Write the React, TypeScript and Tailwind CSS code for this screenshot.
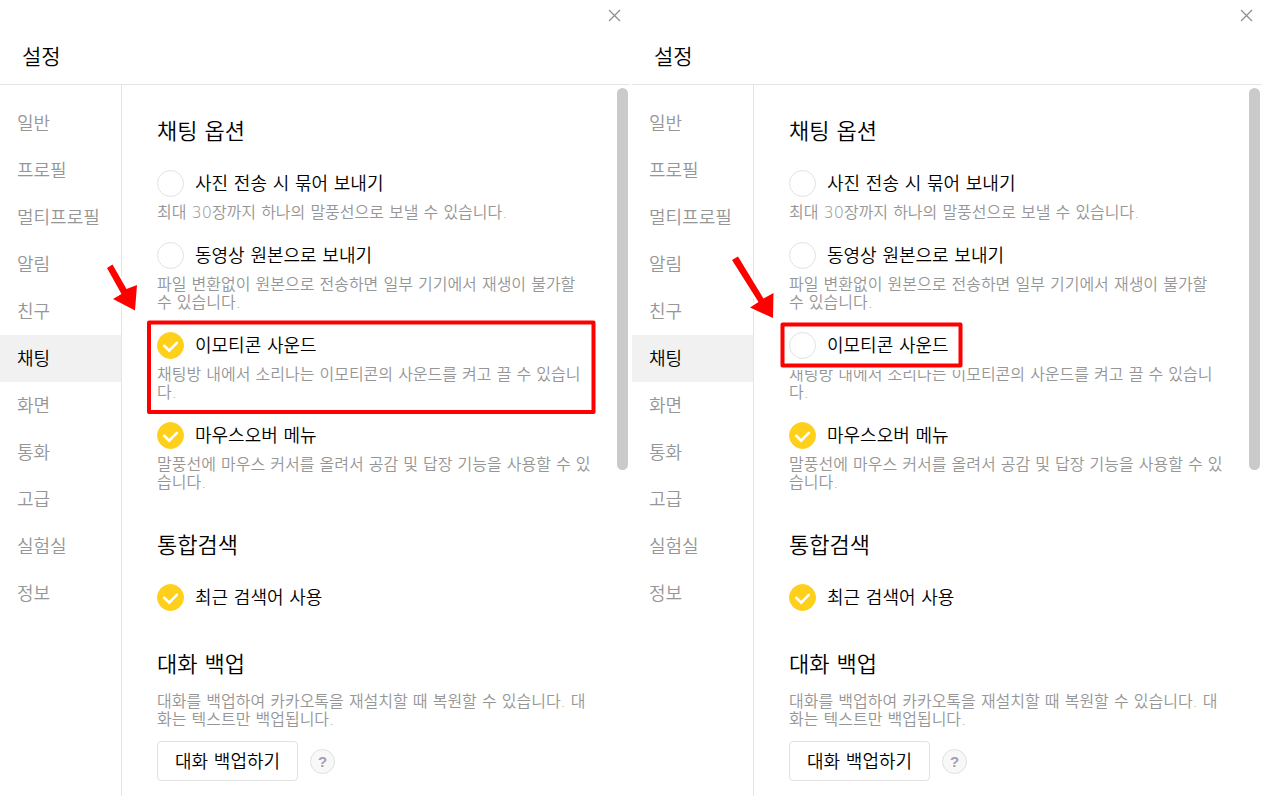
import { ReactNode } from "react";

type Option = { label: string; checked: boolean; desc?: string };

const MENU = ["일반", "프로필", "멀티프로필", "알림", "친구", "채팅", "화면", "통화", "고급", "실험실", "정보"];

function OptionRow({ id, option }: { id: string; option: Option }) {
  return (
    <li>
      <label htmlFor={id} className="flex h-[27px] cursor-pointer items-center gap-[11px] text-[18px] leading-[27px] text-black">
        <span className="grid size-[27px] shrink-0">
          <input
            id={id}
            type="checkbox"
            defaultChecked={option.checked}
            className="peer col-start-1 row-start-1 size-[27px] appearance-none rounded-full border border-[#e2e2e2] bg-white checked:border-[#ffd01a] checked:bg-[#ffd01a]"
          />
          <svg viewBox="0 0 27 27" className="pointer-events-none col-start-1 row-start-1 hidden size-[27px] peer-checked:block" aria-hidden="true">
            <path d="M7.200 13.800l5 4.800 7.600-7.800" fill="none" stroke="#fff" strokeWidth="2.6" strokeLinecap="round" />
          </svg>
        </span>
        {option.label}
      </label>
      {option.desc && <Description className="mt-[7px]">{option.desc}</Description>}
    </li>
  );
}

function Description({ children, className }: { children: ReactNode; className: string }) {
  return <p className={`whitespace-pre-line text-[16px] leading-[18px] text-[#969696] ${className}`}>{children}</p>;
}

function SectionTitle({ children }: { children: ReactNode }) {
  return <h2 className="text-[22px] leading-[28px] text-black">{children}</h2>;
}

function SettingsPanel({ name, soundOn, children }: { name: string; soundOn: boolean; children: ReactNode }) {
  const options: Option[] = [
    { label: "사진 전송 시 묶어 보내기", checked: false, desc: "최대 30장까지 하나의 말풍선으로 보낼 수 있습니다." },
    {
      label: "동영상 원본으로 보내기",
      checked: false,
      desc: "파일 변환없이 원본으로 전송하면 일부 기기에서 재생이 불가할\n수 있습니다.",
    },
    {
      label: "이모티콘 사운드",
      checked: soundOn,
      desc: "채팅방 내에서 소리나는 이모티콘의 사운드를 켜고 끌 수 있습니\n다.",
    },
    {
      label: "마우스오버 메뉴",
      checked: true,
      desc: "말풍선에 마우스 커서를 올려서 공감 및 답장 기능을 사용할 수 있\n습니다.",
    },
  ];
  return (
    <section className="relative flex min-h-screen min-w-0 flex-1 flex-col bg-white">
      <header className="flex h-[85px] flex-col border-b border-[#e5e5e5]">
        <button type="button" aria-label="닫기" className="mt-[9px] mr-[9px] self-end">
          <svg viewBox="0 0 13 13" className="size-[13px]" aria-hidden="true">
            <path d="M1 1l11 11M12 1L1 12" stroke="#918a94" strokeWidth="1.2" />
          </svg>
        </button>
        <h1 className="mt-[21px] pl-[22px] text-[21px] leading-[28px] text-black">설정</h1>
      </header>
      <div className="flex flex-1">
        <nav className="w-[122px] shrink-0 border-r border-[#e5e5e5] pt-[15px]">
          <ul>
            {MENU.map((item) => (
              <li key={item}>
                <a
                  href="#"
                  className={
                    item === "채팅"
                      ? "block bg-[#f1f1f1] pl-[17px] text-[18px] leading-[47px] text-black"
                      : "block pl-[17px] text-[18px] leading-[47px] text-[#969696]"
                  }
                >
                  {item}
                </a>
              </li>
            ))}
          </ul>
        </nav>
        <main className="min-w-0 flex-1 pt-[33px] pb-[15px] pl-[35px]">
          <SectionTitle>채팅 옵션</SectionTitle>
          <ul className="mt-6 flex flex-col gap-5">
            {options.map((o, i) => (
              <OptionRow key={o.label} id={`${name}-chat-${i}`} option={o} />
            ))}
          </ul>
          <div className="mt-10">
            <SectionTitle>통합검색</SectionTitle>
            <ul className="mt-6">
              <OptionRow id={`${name}-search`} option={{ label: "최근 검색어 사용", checked: true }} />
            </ul>
          </div>
          <div className="mt-10">
            <SectionTitle>대화 백업</SectionTitle>
            <Description className="mt-[14px]">
              {"대화를 백업하여 카카오톡을 재설치할 때 복원할 수 있습니다. 대\n화는 텍스트만 백업됩니다."}
            </Description>
            <div className="mt-3 flex items-center gap-3">
              <button type="button" className="h-10 rounded-[4px] border border-[#e2e2e2] px-[17px] text-[18px] leading-[27px] text-black">
                대화 백업하기
              </button>
              <button
                type="button"
                aria-label="도움말"
                className="flex size-[25px] items-center justify-center rounded-full border border-[#e0e0e0] bg-[#f8f8f8] font-['Liberation_Sans'] text-[15px] leading-none font-bold text-[#a99bb0]"
              >
                ?
              </button>
            </div>
          </div>
        </main>
        <div className="mt-[3px] mr-[2px] h-[382px] w-[11px] shrink-0 rounded-full bg-[#cacaca]" aria-hidden="true" />
      </div>
      {children}
    </section>
  );
}

export default function App() {
  return (
    <div className="flex min-h-screen gap-[2px] bg-white font-['DejaVu_Sans','Noto_Sans_CJK_KR',sans-serif] font-[350]">
      <SettingsPanel name="on" soundOn={true}>
        <svg viewBox="0 0 630 430" width="630" height="430" className="pointer-events-none absolute top-0 left-0" aria-hidden="true">
          <rect x="149" y="322.5" width="444.5" height="89.5" fill="none" stroke="#f00" strokeWidth="4" strokeLinejoin="round" />
          <path
            d="M112.500 264.500L126.500 289L137 285L135 310.500L113 299L121.500 294L107 268Z"
            fill="#f00"
            stroke="#fff"
            strokeWidth="4"
            paintOrder="stroke"
          />
        </svg>
      </SettingsPanel>
      <SettingsPanel name="off" soundOn={false}>
        <svg viewBox="0 0 630 430" width="630" height="430" className="pointer-events-none absolute top-0 left-0" aria-hidden="true">
          <rect x="150.500" y="324.500" width="178" height="41" fill="none" stroke="#fff" strokeWidth="9" />
          <rect x="150.500" y="324.500" width="178" height="41" fill="none" stroke="#f00" strokeWidth="4" strokeLinejoin="round" />
          <path
            d="M106 256.500L131.500 298.500L141.500 293L141 318L118 307.500L126.500 302L100 260Z"
            fill="#f00"
            stroke="#fff"
            strokeWidth="4"
            paintOrder="stroke"
          />
        </svg>
      </SettingsPanel>
    </div>
  );
}
